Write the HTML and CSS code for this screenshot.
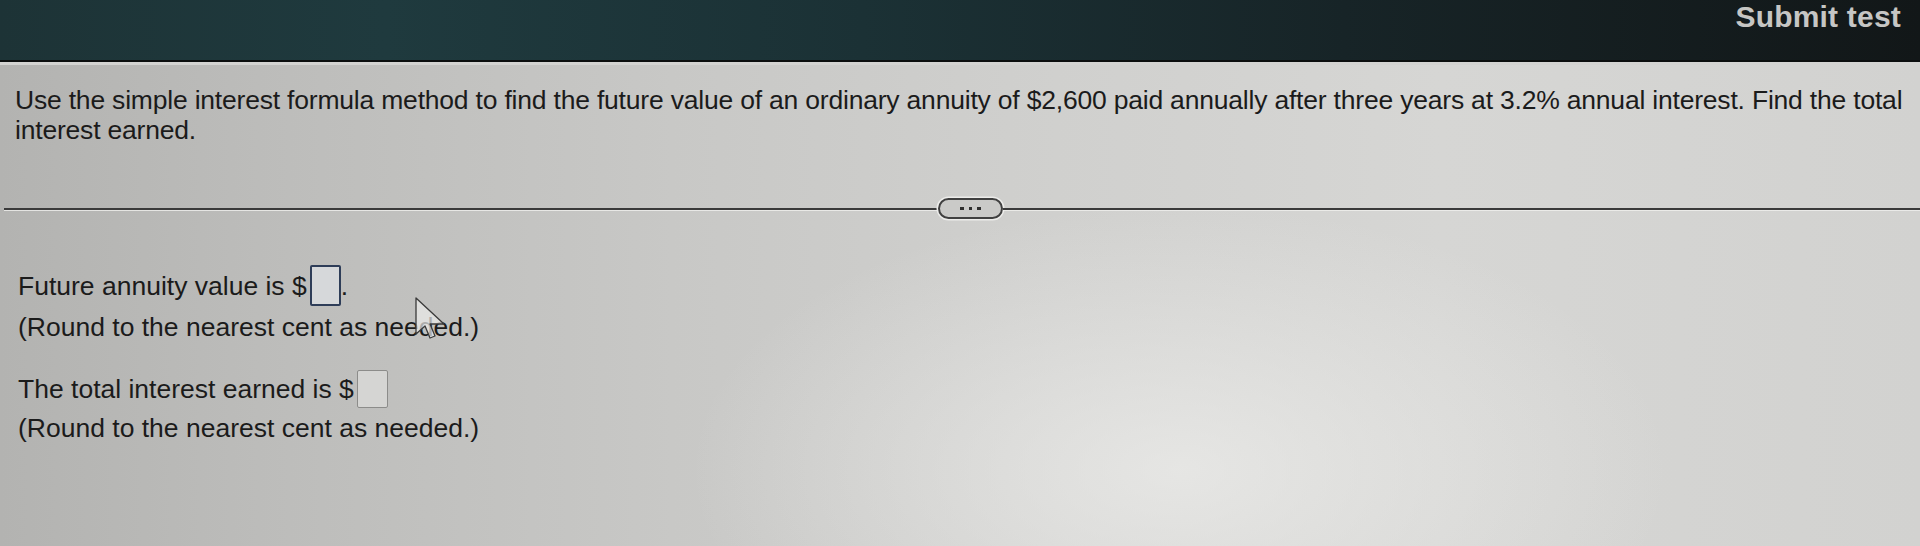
FILE: index.html
```html
<!DOCTYPE html>
<html lang="en">
<head>
<meta charset="utf-8">
<title>Question</title>
<link rel="stylesheet" href="styles.css">
</head>
<body>
<div class="page">
  <header class="topbar">
    <span class="submit">Submit test</span>
  </header>
  <div class="topbar-rule"></div>

  <main class="content">
    <p class="question">Use the simple interest formula method to find the future value of an ordinary annuity of $2,600 paid annually after three years at 3.2% annual interest. Find the total interest earned.</p>

    <div class="divider">
      <div class="divider-line divider-left"></div>
      <button class="more" type="button" aria-label="More"><span class="dot"></span><span class="dot"></span><span class="dot"></span></button>
      <div class="divider-line divider-right"></div>
    </div>

    <div class="answers">
      <div class="answer">
        <div class="answer-line">Future annuity value is $<span class="box box-active"></span>.</div>
        <div class="answer-note">(Round to the nearest cent as needed.)</div>
      </div>
      <div class="answer answer-second">
        <div class="answer-line">The total interest earned is $<span class="box box-second"></span></div>
        <div class="answer-note answer-note-second">(Round to the nearest cent as needed.)</div>
      </div>
      <svg class="cursor" width="40" height="46" viewBox="0 0 40 46" aria-hidden="true">
        <path d="M2 2 L2 38 L11 30 L16 42 L21 40 L16 28 L30 28 Z" fill="rgba(235,235,233,0.7)" stroke="#3a3a3a" stroke-width="1.3" stroke-linejoin="round"/>
      </svg>
    </div>
  </main>
</div>
</body>
</html>
```

FILE: styles.css
```css
html, body {
  margin: 0;
  padding: 0;
}

body {
  width: 1920px;
  height: 546px;
  overflow: hidden;
  font-family: "Liberation Sans", Arial, sans-serif;
  color: #1b1b1b;
  background: #c9c9c7;
}

.page {
  width: 1920px;
  height: 546px;
  display: flex;
  flex-direction: column;
  background:
    radial-gradient(ellipse 700px 380px at 1180px 470px, rgba(238,238,236,0.7), rgba(238,238,236,0) 70%),
    linear-gradient(90deg, #b3b3b1 0%, #bdbdbb 15%, #c8c8c6 35%, #d0d0ce 55%, #d6d6d4 75%, #d2d2d0 100%);
}

.topbar {
  height: 60px;
  flex: 0 0 60px;
  display: flex;
  justify-content: flex-end;
  align-items: flex-start;
  padding-right: 19px;
  background: linear-gradient(90deg, #1d3336 0%, #1f3a3e 20%, #1b3135 45%, #172427 70%, #121718 100%);
  border-bottom: 2px solid #0b0e0e;
}

.submit {
  font-size: 30px;
  font-weight: bold;
  line-height: normal;
  color: #c6c6c4;
  letter-spacing: 0.2px;
}

.topbar-rule {
  height: 3px;
  flex: 0 0 3px;
  background: #d3d3d1;
}

.content {
  flex: 1;
  position: relative;
}

.question {
  margin: 0;
  padding: 20px 0 0 15px;
  font-size: 26.5px;
  line-height: 30px;
  letter-spacing: -0.2px;
}

.divider {
  display: flex;
  align-items: center;
  margin-top: 53px;
  height: 21px;
}

.divider-line {
  height: 2px;
  background: #3a3a3a;
  box-shadow: 0 1px 0 rgba(240,240,238,0.8);
}

.divider-left {
  margin-left: 4px;
  flex: 0 0 934px;
}

.divider-right {
  flex: 1;
}

.more {
  flex: 0 0 65px;
  height: 21px;
  box-sizing: border-box;
  border: 2px solid #404040;
  border-radius: 11px;
  background: #cacac8;
  box-shadow: 0 0 0 1.5px #ececea;
  padding: 0;
  display: flex;
  justify-content: center;
  align-items: center;
  gap: 5px;
}

.dot {
  width: 3.5px;
  height: 3.5px;
  background: #2e2e2e;
}

.answers {
  margin-top: 46px;
  padding-left: 18px;
  font-size: 26.5px;
}

.answer-line {
  line-height: 30px;
}

.answer-note {
  line-height: 42px;
}

.answer-second {
  margin-top: 22px;
}

.answer-note-second {
  line-height: 40px;
}

.box {
  display: inline-block;
  box-sizing: border-box;
  width: 31px;
  margin-left: 3px;
  border-radius: 2px;
}

.box-active {
  height: 41px;
  vertical-align: -11px;
  border: 2px solid #2e3d58;
  background: #d6d8da;
}

.box-second {
  height: 38px;
  vertical-align: -10px;
  border: 1.5px solid #8c8c8a;
  background: #d5d5d3;
}

.cursor {
  position: absolute;
  left: 414px;
  top: 231px;
}
```
